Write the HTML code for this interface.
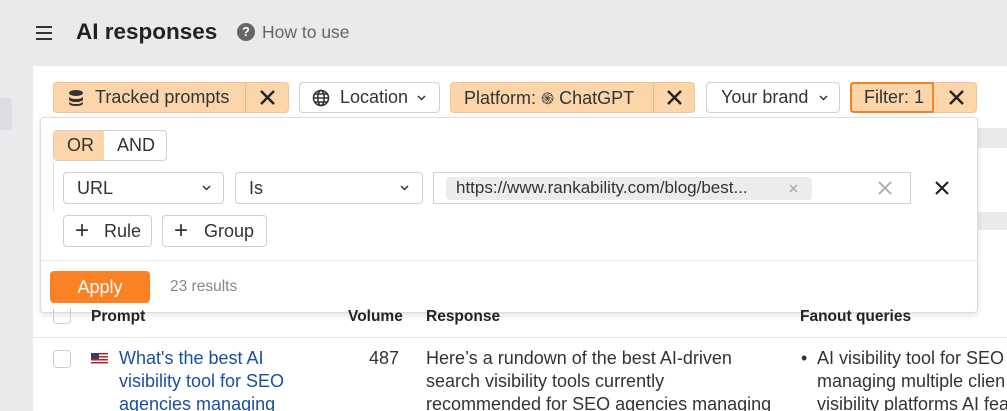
<!DOCTYPE html>
<html><head><meta charset="utf-8"><style>
*{box-sizing:border-box;margin:0;padding:0}
html,body{width:1007px;height:411px;overflow:hidden}
body{background:#e9eaec;font-family:"Liberation Sans",sans-serif;color:#333;position:relative}
.a{position:absolute}
.btn{position:absolute;height:31px;border:1px solid #cfcfcf;border-radius:4px;background:#fff;font-size:18px;display:flex;align-items:center;color:#333}
.or{background:#fcd5aa;border-color:#f2c490}
.dv{position:absolute;top:0;bottom:0;width:1px;background:#e8b984}
.t{position:absolute;font-size:16px;white-space:nowrap}
.ch{position:absolute;top:12px}
</style></head><body>
<div class="a" style="left:36px;top:26px;width:16px;height:2px;background:#333;box-shadow:0 6px 0 #333,0 12px 0 #333"></div>
<div class="a" style="left:76px;top:19px;font-size:22.5px;font-weight:bold;color:#222">AI responses</div>
<div class="a" style="left:237px;top:23px;width:18px;height:18px;border-radius:50%;background:#666;color:#fff;font-size:13px;font-weight:bold;text-align:center;line-height:18px">?</div>
<div class="a" style="left:262px;top:22px;font-size:17.5px;color:#666">How to use</div>
<div class="a" style="left:0;top:98px;width:12px;height:32px;background:#dcdde0;border-radius:0 4px 4px 0"></div>
<div class="a" style="left:33px;top:66px;right:0;bottom:0;background:#fff"></div>
<div class="a" style="left:978px;top:128px;right:0;height:20px;background:#e9eaec"></div>
<div class="a" style="left:978px;top:212px;right:0;height:18px;background:#e9eaec"></div>
<!-- filter bar -->
<div class="btn or" style="left:53px;top:82px;width:236px">
 <svg class="a" style="left:13px;top:6px" width="18" height="18" viewBox="0 0 18 18"><ellipse cx="9" cy="4" rx="7" ry="3" fill="#333"/><path d="M2 7c0 2 3 3 7 3s7-1 7-3v3c0 2-3 3-7 3s-7-1-7-3z M2 12c0 2 3 3 7 3s7-1 7-3v2c0 2-3 3-7 3s-7-1-7-3z" fill="#333"/></svg>
 <span class="a" style="left:41px">Tracked prompts</span><div class="dv" style="left:191px"></div>
 <svg class="a" style="left:206px;top:7px" width="15" height="15" viewBox="0 0 15 15" stroke="#222" stroke-width="2.4"><path d="M1 1L14 14M14 1L1 14"/></svg></div>
<div class="btn" style="left:299px;top:82px;width:141px">
 <svg class="a" style="left:12px;top:6px" width="18" height="18" viewBox="0 0 18 18" fill="none" stroke="#333" stroke-width="1.6"><circle cx="9" cy="9" r="7.5"/><ellipse cx="9" cy="9" rx="3.2" ry="7.5"/><path d="M1.5 9h15M3 5h12M3 13h12"/></svg>
 <span class="a" style="left:40px">Location</span>
 <svg class="ch" style="left:117px" width="9" height="6" viewBox="0 0 9 6" fill="none" stroke="#333" stroke-width="1.5"><path d="M1 1l3.5 3.5L8 1"/></svg></div>
<div class="btn or" style="left:450px;top:82px;width:245px"><span class="a" style="left:13px">Platform: <span style="font-size:16px">֍</span> ChatGPT</span><div class="dv" style="left:202px"></div>
 <svg class="a" style="left:216px;top:7px" width="15" height="15" viewBox="0 0 15 15" stroke="#222" stroke-width="2.4"><path d="M1 1L14 14M14 1L1 14"/></svg></div>
<div class="btn" style="left:706px;top:82px;width:134px"><span class="a" style="left:14px">Your brand</span>
 <svg class="ch" style="left:112px" width="9" height="6" viewBox="0 0 9 6" fill="none" stroke="#333" stroke-width="1.5"><path d="M1 1l3.5 3.5L8 1"/></svg></div>
<div class="btn or" style="left:850px;top:82px;width:127px"><div class="a" style="left:-1px;top:-1px;width:84px;height:31px;border:2px solid #f5821f;border-radius:4px 0 0 4px"></div><span class="a" style="left:13px">Filter: 1</span>
 <svg class="a" style="left:98px;top:7px" width="15" height="15" viewBox="0 0 15 15" stroke="#222" stroke-width="2.4"><path d="M1 1L14 14M14 1L1 14"/></svg></div>
<!-- popup -->
<div class="a" style="left:40px;top:117px;width:938px;height:196px;background:#fff;border:1px solid #ddd;border-radius:4px;box-shadow:0 2px 6px rgba(0,0,0,.12)"></div>
<div class="a" style="left:53px;top:162px;width:1px;height:50px;background:#ddd"></div>
<div class="btn" style="left:53px;top:130px;width:114px;height:31px"><div class="a" style="left:0;top:0;width:50px;height:29px;background:#fcd5aa"></div><span class="a" style="left:13px">OR</span><span class="a" style="left:63px">AND</span></div>
<div class="btn" style="left:63px;top:172px;width:161px;height:32px"><span class="a" style="left:13px">URL</span>
 <svg class="ch" style="left:138px" width="9" height="6" viewBox="0 0 9 6" fill="none" stroke="#333" stroke-width="1.5"><path d="M1 1l3.5 3.5L8 1"/></svg></div>
<div class="btn" style="left:235px;top:172px;width:188px;height:32px"><span class="a" style="left:13px">Is</span>
 <svg class="ch" style="left:164px" width="9" height="6" viewBox="0 0 9 6" fill="none" stroke="#333" stroke-width="1.5"><path d="M1 1l3.5 3.5L8 1"/></svg></div>
<div class="btn" style="left:433px;top:172px;width:478px;height:32px;border-radius:0">
 <div class="a" style="left:12px;top:4px;width:366px;height:23px;background:#ececec;border-radius:4px"></div>
 <span class="a" style="left:22px;font-size:17px">https://www.rankability.com/blog/best...</span>
 <svg class="a" style="left:355px;top:11px" width="9" height="9" viewBox="0 0 9 9" stroke="#aaa" stroke-width="1.5"><path d="M1 1l7 7M8 1L1 8"/></svg>
 <svg class="a" style="left:444px;top:8px" width="14" height="14" viewBox="0 0 14 14" stroke="#aaa" stroke-width="1.8"><path d="M1 1l12 12M13 1L1 13"/></svg></div>
<svg class="a" style="left:935px;top:181px" width="14" height="14" viewBox="0 0 14 14" stroke="#222" stroke-width="2.2"><path d="M1 1l12 12M13 1L1 13"/></svg>
<div class="btn" style="left:63px;top:215px;width:89px;height:32px"><span class="a" style="left:11px;font-size:24px">+</span><span class="a" style="left:40px">Rule</span></div>
<div class="btn" style="left:162px;top:215px;width:105px;height:32px"><span class="a" style="left:11px;font-size:24px">+</span><span class="a" style="left:41px">Group</span></div>
<div class="a" style="left:41px;top:260px;width:936px;height:1px;background:#e6e6e6"></div>
<div class="a" style="left:50px;top:271px;width:100px;height:32px;background:#fb8224;border-radius:4px;color:#fff;font-size:18px;text-align:center;line-height:32px">Apply</div>
<div class="t" style="left:170px;top:278px;font-size:15.5px;color:#888">23 results</div>
<!-- table -->
<div class="a" style="left:53px;top:308px;width:18px;height:16px;border:1px solid #ccc;border-top:none;border-radius:0 0 4px 4px"></div>
<div class="t" style="left:91px;top:308px;font-weight:bold;color:#222;font-size:15.5px">Prompt</div>
<div class="t" style="left:348px;top:308px;font-weight:bold;color:#222;font-size:15.5px">Volume</div>
<div class="t" style="left:426px;top:308px;font-weight:bold;color:#222;font-size:15.5px">Response</div>
<div class="t" style="left:800px;top:308px;font-weight:bold;color:#222;font-size:15.5px">Fanout queries</div>
<div class="a" style="left:33px;top:337px;right:0;height:1px;background:#e6e6e6"></div>
<div class="a" style="left:53px;top:350px;width:18px;height:18px;border:1px solid #ccc;border-radius:4px"></div>
<svg class="a" style="left:91px;top:353px" width="17" height="12" viewBox="0 0 17 12"><rect width="17" height="12" fill="#fff"/><g fill="#b22"><rect y="0" width="17" height="1.5"/><rect y="3" width="17" height="1.5"/><rect y="6" width="17" height="1.5"/><rect y="9" width="17" height="1.5"/></g><rect width="8" height="6" fill="#3c3b6e"/></svg>
<div class="a" style="left:119px;top:347px;font-size:18px;line-height:23px;color:#1a4fa0;width:220px;white-space:nowrap">What's the best AI<br>visibility tool for SEO<br>agencies managing</div>
<div class="t" style="left:369px;top:347px;font-size:18px;line-height:23px">487</div>
<div class="a" style="left:426px;top:347px;font-size:18px;line-height:23px;white-space:nowrap">Here’s a rundown of the best AI-driven<br>search visibility tools currently<br>recommended for SEO agencies managing</div>
<div class="a" style="left:801px;top:347px;font-size:18px;line-height:23px;white-space:nowrap">•</div>
<div class="a" style="left:817px;top:347px;font-size:18px;line-height:23px;white-space:nowrap">AI visibility tool for SEO<br>managing multiple clien<br>visibility platforms AI fea</div>
</body></html>
